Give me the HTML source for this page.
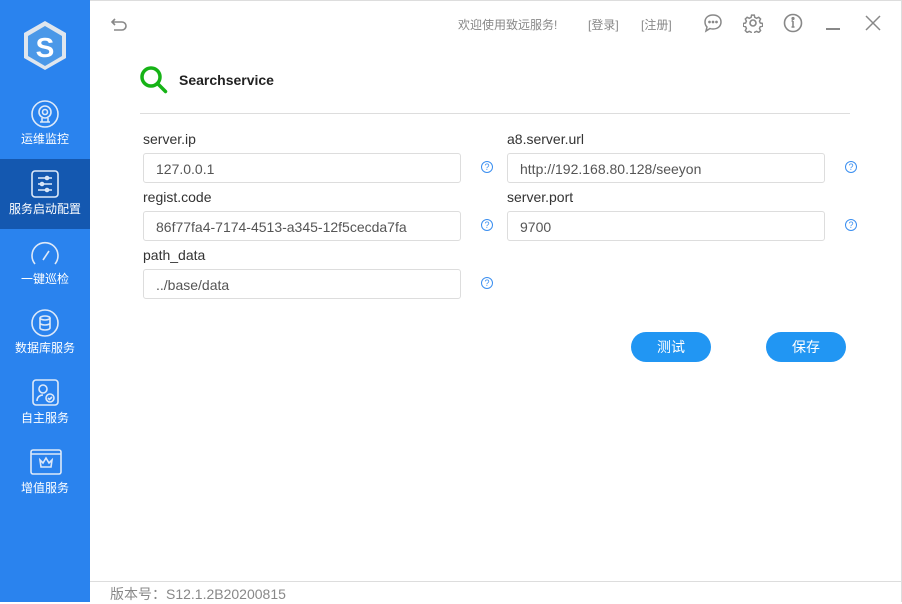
<!DOCTYPE html>
<html><head><meta charset="utf-8"><style>
*{margin:0;padding:0;box-sizing:border-box}
body{width:902px;height:602px;position:relative;overflow:hidden;background:#fff;font-family:"Liberation Sans","Noto Sans CJK SC",sans-serif}
.side{position:absolute;left:0;top:0;width:90px;height:602px;background:#2a83ee}
.item{position:absolute;left:0;width:90px;height:70px;color:#fff;font-size:12px;text-align:center}
.item svg{position:absolute;left:30px;top:11px}
.item span{position:absolute;left:0;right:0;top:41px;white-space:nowrap}
.act{background:#1458b0}
.abs{position:absolute}
.lbl{position:absolute;font-size:14px;color:#333}
.inp{position:absolute;width:318px;height:30px;border:1px solid #ddd;border-radius:3px;font-size:14px;color:#555;padding:7px 0 0 12px}
.q{position:absolute;width:12px;height:12px;border:1px solid #3b8ff0;border-radius:50%;color:#3b8ff0;font-size:9px;line-height:11px;text-align:center}
.btn{position:absolute;top:332px;width:80px;height:30px;border-radius:15px;background:#2196f3;color:#fff;font-size:14px;text-align:center;line-height:30px}
.top{position:absolute;top:16px;font-size:12px;color:#888}
</style></head><body>
<div class="abs" style="left:90px;top:0;width:812px;height:1px;background:#ddd"></div>
<div class="abs" style="right:0;top:0;width:1px;height:602px;background:#ddd"></div>
<div class="side">
<svg class="abs" style="left:21px;top:20px" width="48" height="52" viewBox="0 0 48 52"><polygon points="24,1 45,13 45,38 24,50 3,38 3,13" fill="#dfe6ee"/><polygon points="24,6 41,16 41,36 24,46 7,36 7,16" fill="#4a98e8"/><text x="24" y="37" font-size="28" font-weight="bold" fill="#fff" text-anchor="middle" font-family="Liberation Sans">S</text></svg>
<div class="item" style="top:89px"><svg width="30" height="30" viewBox="0 0 30 30" fill="none" stroke="#dde9f9" stroke-width="1.6"><circle cx="15" cy="14" r="13"/><circle cx="15" cy="12" r="6"/><circle cx="15" cy="12" r="2.5"/><path d="M10 22h10M12 18v4M18 18v4"/></svg><span>运维监控</span></div>
<div class="item act" style="top:159px"><svg width="30" height="30" viewBox="0 0 30 30" fill="none" stroke="#dde9f9" stroke-width="1.6"><rect x="2" y="1" width="26" height="26" rx="3"/><path d="M8 8h14M8 14h14M8 20h14"/><circle cx="17" cy="8" r="1.5"/><circle cx="12" cy="14" r="1.5"/><circle cx="17" cy="20" r="1.5"/></svg><span>服务启动配置</span></div>
<div class="item" style="top:229px"><svg width="30" height="30" viewBox="0 0 30 30" fill="none" stroke="#dde9f9" stroke-width="1.6"><path d="M5 24a13 13 0 1 1 20 0"/><path d="M13 20l6-9"/></svg><span>一键巡检</span></div>
<div class="item" style="top:298px"><svg width="30" height="30" viewBox="0 0 30 30" fill="none" stroke="#dde9f9" stroke-width="1.6"><circle cx="15" cy="14" r="13"/><ellipse cx="15" cy="9" rx="5" ry="2"/><path d="M10 9v10c0 1 2 2 5 2s5-1 5-2V9M10 14c0 1 2 2 5 2s5-1 5-2"/></svg><span>数据库服务</span></div>
<div class="item" style="top:368px"><svg width="30" height="30" viewBox="0 0 30 30" fill="none" stroke="#dde9f9" stroke-width="1.6"><rect x="3" y="1" width="25" height="25" rx="3"/><circle cx="13" cy="10" r="4"/><path d="M7 22c0-4 3-6 6-6"/><circle cx="20" cy="19" r="4"/><path d="M18 19l1.5 1.5 2.5-2.5"/></svg><span>自主服务</span></div>
<div class="item" style="top:438px"><svg width="32" height="28" viewBox="0 0 32 28" fill="none" stroke="#dde9f9" stroke-width="1.6"><rect x="1" y="1" width="30" height="24" rx="2"/><path d="M1 5h30"/><path d="M10 11l3 3 3-5 3 5 3-3-1 7h-10z"/></svg><span>增值服务</span></div>
</div>
<svg class="abs" style="left:110px;top:17px" width="20" height="16" viewBox="0 0 20 16" fill="none" stroke="#888" stroke-width="1.6"><path d="M5 2L2 5l3 3M2 5h10a4 4 0 0 1 0 8H4"/></svg>
<div class="top" style="left:458px">欢迎使用致远服务!</div>
<div class="top" style="left:588px">[登录]</div>
<div class="top" style="left:641px">[注册]</div>
<svg class="abs" style="left:703px;top:13px" width="20" height="20" viewBox="0 0 20 20" fill="none" stroke="#888" stroke-width="1.5"><path d="M10 2c5 0 8 3 8 7s-3 7-8 7c-1 0-2 0-3-.5L3 18l1-4C3 13 2 11 2 9c0-4 3-7 8-7z"/><circle cx="6.5" cy="9" r=".6" fill="#888"/><circle cx="10" cy="9" r=".6" fill="#888"/><circle cx="13.5" cy="9" r=".6" fill="#888"/></svg>
<svg class="abs" style="left:743px;top:13px" width="20" height="20" viewBox="0 0 20 20" fill="none" stroke="#888" stroke-width="1.6"><circle cx="10" cy="10" r="3"/><path d="M8.5 1.5h3l.5 2.5 2 1 2.3-1.2 2 2-1.2 2.3.9 2 2.5.4v3l-2.5.5-.9 2 1.2 2.3-2 2-2.3-1.2-2 .9-.5 2.5h-3l-.5-2.5-2-.9-2.3 1.2-2-2 1.2-2.3-.9-2-2.5-.5v-3l2.5-.4.9-2-1.2-2.3 2-2 2.3 1.2 2-1z" transform="scale(.92) translate(.8 .8)"/></svg>
<svg class="abs" style="left:783px;top:13px" width="20" height="20" viewBox="0 0 20 20" fill="none" stroke="#888" stroke-width="1.6"><circle cx="10" cy="10" r="8.5"/><path d="M10 8v6M8.5 14h3M8.5 8H10"/><circle cx="10" cy="5.5" r=".8" fill="#888"/></svg>
<div class="abs" style="left:826px;top:28px;width:14px;height:2px;background:#888"></div>
<svg class="abs" style="left:865px;top:15px" width="16" height="16" viewBox="0 0 16 16" stroke="#888" stroke-width="1.5"><path d="M1 1l14 14M15 1L1 15"/></svg>
<svg class="abs" style="left:139px;top:65px" width="30" height="30" viewBox="0 0 30 30" fill="none" stroke="#16b316" stroke-width="3.5"><circle cx="12" cy="12" r="9"/><path d="M18.5 18.5l8 8" stroke-linecap="round"/></svg>
<div class="abs" style="left:179px;top:72px;font-size:14px;font-weight:bold;color:#222">Searchservice</div>
<div class="abs" style="left:140px;top:113px;width:710px;height:1px;background:#ddd"></div>
<div class="lbl" style="left:143px;top:131px">server.ip</div>
<div class="inp" style="left:143px;top:153px">127.0.0.1</div>
<div class="q" style="left:481px;top:161px">?</div>
<div class="lbl" style="left:143px;top:189px">regist.code</div>
<div class="inp" style="left:143px;top:211px">86f77fa4-7174-4513-a345-12f5cecda7fa</div>
<div class="q" style="left:481px;top:219px">?</div>
<div class="lbl" style="left:143px;top:247px">path_data</div>
<div class="inp" style="left:143px;top:269px">../base/data</div>
<div class="q" style="left:481px;top:277px">?</div>
<div class="lbl" style="left:507px;top:131px">a8.server.url</div>
<div class="inp" style="left:507px;top:153px">http://192.168.80.128/seeyon</div>
<div class="q" style="left:845px;top:161px">?</div>
<div class="lbl" style="left:507px;top:189px">server.port</div>
<div class="inp" style="left:507px;top:211px">9700</div>
<div class="q" style="left:845px;top:219px">?</div>
<div class="btn" style="left:631px">测试</div>
<div class="btn" style="left:766px">保存</div>
<div class="abs" style="left:90px;top:581px;width:812px;height:1px;background:#ddd"></div>
<div class="abs" style="left:110px;top:584px;font-size:14px;color:#888">版本号：S12.1.2B20200815</div>
</body></html>
